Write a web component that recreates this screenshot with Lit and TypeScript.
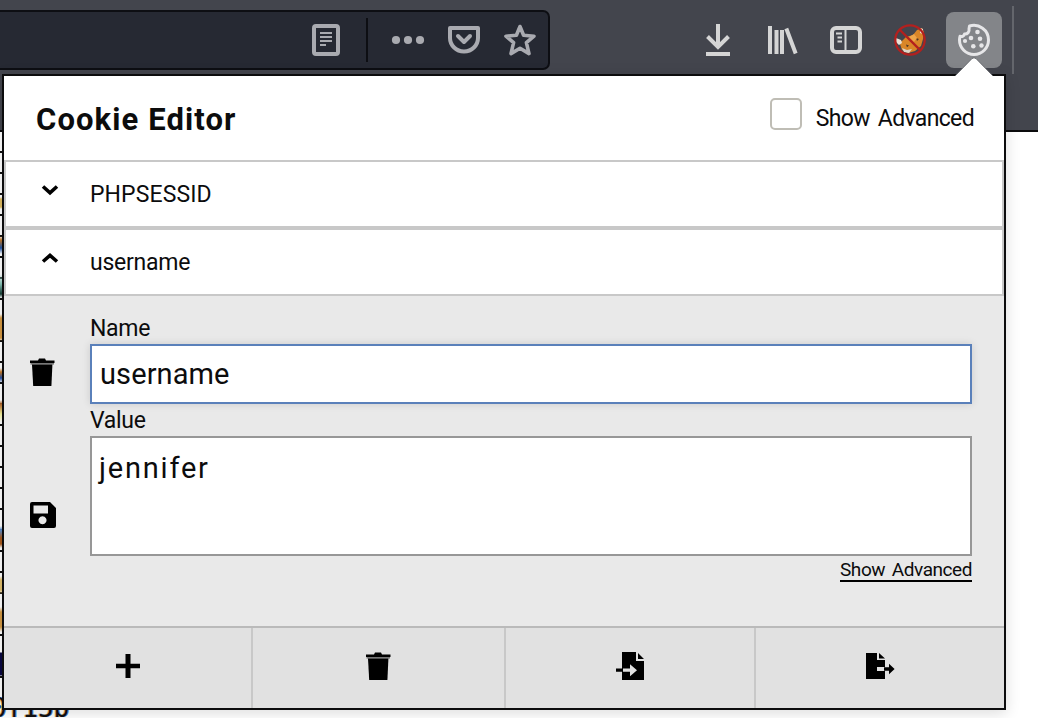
import { LitElement, html, css, svg } from "lit";
import { customElement, property, state } from "lit/decorators.js";

const trash = svg`<path d="M1 2.400h8L10 .4h6l1 2h8.500V5H1z"/><path d="M1.500 5h23.500v1.600H1.500z" fill="#777"/><path d="M3 6.600h20.400l-1 21.400H4.200z"/>`;

const exportGlyph = svg`
  <path d="M0 0h11v7h8v7H11v4h8v8H0z"/>
  <path d="M13 0l6 5.600h-6zM18 14.300h5v-3.600l5.600 5.300-5.600 5.300v-3.600h-5z"/>`;

const importGlyph = svg`
  <path d="M6 0h14v9h8v19H6z"/>
  <path d="M22 1l6 6h-6zM0 16.600h6v3.200H0z"/>
  <path fill="#e1e1e1" d="M7 16.600h7v-4.400l7 6-7 6v-4.400H7z"/>`;

@customElement("cookie-row")
export class CookieRow extends LitElement {
  @property() name = "";
  @property({ type: Boolean }) open = false;

  static styles = css`
    :host { display: flex; align-items: center; box-sizing: border-box; height: 68px; border: 2px solid #c8c8c8; background: #fff; padding-left: 35px; }
    .chevron { width: 18px; height: 12px; margin-bottom: 8px; margin-right: 31px; fill: none; stroke: #000; stroke-width: 3.6; }
    .name { font-size: 23px; line-height: 28px; padding-top: 2px; }
    .upper { letter-spacing: 0.1px; }
    .lower { letter-spacing: -0.25px; }
  `;

  render() {
    return html`
      <svg class="chevron" viewBox="0 0 18 12">
        <path d=${this.open ? "M2 9.5L9 3.4L16 9.5" : "M2 2.5L9 8.8L16 2.5"} />
      </svg>
      <span class="name ${this.open ? "lower" : "upper"}">${this.name}</span>
    `;
  }
}

@customElement("browser-toolbar")
export class BrowserToolbar extends LitElement {
  static styles = css`
    :host { display: flex; align-items: flex-start; box-sizing: border-box; height: 132px; background: #43454d; border-bottom: 2px solid #0c0c0d; }
    svg { display: block; overflow: visible; }
    .urlbar { display: flex; align-items: center; justify-content: flex-end; box-sizing: border-box; width: 550px; height: 60px; margin-top: 10px; padding-right: 12px; background: #262933; border: 2px solid #0d0e13; border-left: 0; border-radius: 0 7px 7px 0; }
    .glyph { width: 32px; height: 32px; }
    .dim { color: #a9aab0; }
    .divider { width: 2px; height: 44px; margin: 0 24px; background: #0d0e13; }
    .gap { margin-right: 24px; }
    .actions { display: flex; align-items: center; gap: 32px; height: 56px; margin: 12px 0 0 152px; color: #d5d5d5; }
    .active { display: flex; align-items: center; justify-content: center; width: 56px; height: 56px; margin-left: -12px; background: #838589; border-radius: 8px; color: #e6e6e8; }
    .edge { width: 2px; height: 68px; margin: 6px 0 0 10px; background: #64666c; }
  `;

  render() {
    return html`
      <div class="urlbar">
        <svg class="glyph dim" viewBox="0 0 32 32" fill="none" stroke="currentColor">
          <rect x="4" y="2" width="24" height="28" rx="2" stroke-width="4" />
          <path d="M10 9h12M10 13h12M10 17h12M10 21h6" stroke-width="2" />
        </svg>
        <div class="divider"></div>
        <svg class="glyph dim gap" viewBox="0 0 32 32" fill="currentColor">
          <circle cx="4" cy="16" r="4.1" /><circle cx="16" cy="16" r="4.1" /><circle cx="28" cy="16" r="4.1" />
        </svg>
        <svg class="glyph dim gap" viewBox="0 0 32 32" fill="none" stroke="currentColor" stroke-width="4" stroke-linejoin="round">
          <path d="M2 4h28v10a14 13.500 0 0 1-28 0z" />
          <path d="M10 12l6 6 6-6" stroke-linecap="round" />
        </svg>
        <svg class="glyph dim" viewBox="0 0 32 32" fill="none" stroke="currentColor" stroke-width="3.6" stroke-linejoin="round">
          <path d="M16 2.500l3.600 8.800 10.400.9-7.600 6.500 2.600 10.900-9-5.400-9 5.400 2.600-10.900L2 12.200l10.400-.9z" />
        </svg>
      </div>
      <div class="actions">
        <svg class="glyph" viewBox="0 0 32 32" fill="none" stroke="currentColor" stroke-width="4">
          <path d="M16 0v23M5.500 12.500L16 23l10.500-10.500M4 30h24" />
        </svg>
        <svg class="glyph" viewBox="0 0 32 32" fill="none" stroke="currentColor" stroke-width="4">
          <path d="M4 2v28M10.500 6v24M16 6v24M20.300 4.500l9.400 25" />
        </svg>
        <svg class="glyph" viewBox="0 0 32 32" fill="none" stroke="currentColor">
          <rect x="2" y="4" width="28" height="24" rx="4" stroke-width="4" />
          <path d="M15.500 5v22M6 9.500h6M7.500 13.500h4.500M7.500 17.500h4.500" stroke-width="2" />
        </svg>
        <svg class="glyph" viewBox="0 0 32 32">
          <path d="M3 16l5 1 4-4 7-2 4-5 5-2 2 4-1 7-2 7-6 5-7 2-6-3-2-6z" fill="#d98628" />
          <path d="M2 14l5 2 1 3-3 2-3-3zM26 4l3 1 0 5-3-1z" fill="#e9e2d8" />
          <path d="M8 24l5 2 5-1-3 4-5-1z" fill="#ddd5c8" />
          <path d="M12 20.500l3 1-2 1.800zM22 14l3 1-2 2z" fill="#4c3527" />
          <path d="M15 13l5-3 3 4-3 4z" fill="#eda64a" />
          <circle cx="16" cy="16" r="14.700" fill="none" stroke="#b3201e" stroke-width="2.200" />
          <path d="M6 6l20 20" stroke="#b3201e" stroke-width="2.400" />
        </svg>
        <div class="active">
          <svg class="glyph" viewBox="0 0 32 32" fill="none" stroke="currentColor" stroke-width="3" stroke-linejoin="round">
            <path d="M11.500 2C21 -.8 30.500 6 30.500 16a14.500 14.500 0 0 1-29 0c0-1.300.2-2.500.5-3.700 2.200.7 4-.2 4.500-2.300 3 .2 5.200-2.200 4.500-5z" />
            <g fill="currentColor" stroke="none">
              <circle cx="19.500" cy="8" r="2.300" /><circle cx="13" cy="14" r="2.300" /><circle cx="22" cy="14.700" r="2.300" /><circle cx="7" cy="17" r="2.100" />
              <circle cx="15.300" cy="22.300" r="2.300" /><circle cx="23.500" cy="21.500" r="2.200" />
            </g>
          </svg>
        </div>
      </div>
      <div class="edge"></div>
    `;
  }
}

@customElement("app-root")
export class AppRoot extends LitElement {
  @state() private cookieName = "username";
  @state() private cookieValue = "jennifer";

  static styles = css`
    :host { display: block; position: relative; width: 1038px; height: 718px; overflow: hidden; background: #fff; color: #0c0c0d; font-family: Roboto, "Liberation Sans", sans-serif; }
    * { box-sizing: border-box; }
    .page { display: flex; flex-direction: column; justify-content: space-between; height: 589px; }
    .margin-strip { width: 4px; height: 550px; background:
      linear-gradient(#0000 65px, #e0bd63 67px 75px, #0000 77px 104px, #c47a29 108px, #1f55a8 116px, #0000 122px 142px, #87c5b8 152px, #163f36 162px, #0000 166px 182px, #d69a43 186px 206px, #0000 209px 236px, #c87925 240px, #234fa6 246px, #0000 251px 268px, #b96b2e 272px, #f5f49c 282px, #0000 290px 394px, #5b91d5 398px, #a95b1d 406px 412px, #0000 416px 444px, #e2c06e 448px 458px, #0000 462px 475px, #d49a45 480px 495px, #0000 500px 520px, #090743 521px 543px, #0000 544px),
      repeating-linear-gradient(#fff 0 19px, #111 19px 21px); }
    .page-text { font: 26px/26px "DejaVu Sans Mono", monospace; margin-left: -9px; color: #111; text-shadow: -1px 0 #d9a45a, 1px 0 #5a8ad0; }
    .popup { position: absolute; left: 2px; top: 74px; width: 1004px; height: 636px; display: flex; flex-direction: column; background: #fff; border: 2px solid #0c0c0d; box-shadow: 0 3px 14px rgba(0, 0, 0, 0.14); }
    .pointer { position: absolute; right: 10px; top: -19px; width: 40px; height: 21px; }
    .header { display: flex; align-items: center; justify-content: space-between; height: 84px; padding: 0 30px 0 32px; }
    .title { margin: 0; font-size: 31px; line-height: 36px; letter-spacing: 1.1px; font-weight: 700; padding-top: 3px; }
    .advanced { display: flex; align-items: center; gap: 14px; font-size: 23px; line-height: 28px; letter-spacing: -0.65px; word-spacing: 3px; }
    .caption { padding-top: 2px; }
    .box { width: 32px; height: 32px; margin-bottom: 8px; border: 2px solid #bfbdb5; border-radius: 5px; }
    .details { display: flex; height: 330px; background: #e9e9e9; padding-right: 32px; }
    .side { display: flex; flex-direction: column; gap: 116px; width: 86px; padding: 62px 0 0 25px; }
    .icon { width: 28px; height: 28px; display: block; overflow: visible; }
    .fields { flex: 1; display: flex; flex-direction: column; gap: 4px; padding-top: 20px; }
    .label { height: 24px; font-size: 23px; line-height: 26px; letter-spacing: -0.3px; }
    .name-input { height: 60px; padding: 0 8px; border: 2px solid #5a80ba; background: #fff; box-shadow: 0 0 8px rgba(0, 0, 0, 0.13); font-size: 29px; line-height: 57px; letter-spacing: 0.1px; }
    .value-input { height: 120px; padding: 12px 7px; border: 2px solid #979797; background: #fff; font-size: 29px; line-height: 36px; letter-spacing: 1.8px; }
    .link { align-self: flex-end; font-size: 19px; line-height: 20px; height: 22px; letter-spacing: -0.45px; word-spacing: 2.5px; border-bottom: 2px solid #000; white-space: nowrap; }
    .footer { display: grid; grid-template-columns: 249px 253px 250px 1fr; height: 82px; border-top: 2px solid #bababa; background: #e1e1e1; }
    .cell { display: flex; align-items: center; justify-content: center; padding-bottom: 4px; border-right: 2px solid #c8c8c8; }
    .cell:last-child { border-right: 0; padding-right: 1px; }
  `;

  render() {
    return html`
      <browser-toolbar></browser-toolbar>
      <div class="page">
        <div class="margin-strip"></div>
        <div class="page-text">0f15b</div>
      </div>
      <div class="popup">
        <svg class="pointer" viewBox="0 0 40 21"><path d="M1 19L18 1.500Q20 0 22 1.500L39 19" fill="#fff" stroke="#65676c" stroke-width="1" /><path d="M2 18h36v3H2z" fill="#fff" /></svg>
        <div class="header">
          <h1 class="title">Cookie Editor</h1>
          <div class="advanced"><span class="box"></span><span class="caption">Show Advanced</span></div>
        </div>
        <cookie-row name="PHPSESSID"></cookie-row>
        <cookie-row name=${this.cookieName} open></cookie-row>
        <div class="details">
          <div class="side">
            <svg class="icon" viewBox="0 0 28 28">${trash}</svg>
            <svg class="icon" viewBox="0 0 28 28"><path fill-rule="evenodd" d="M3 0h18l6 6v18a2 2 0 0 1-2 2H3a2 2 0 0 1-2-2V2a2 2 0 0 1 2-2zM4.500 3.500v8H19v-8zM13.500 14.300a4 4 0 1 0 .01 0z" /></svg>
          </div>
          <div class="fields">
            <div class="label">Name</div>
            <div class="name-input">${this.cookieName}</div>
            <div class="label">Value</div>
            <div class="value-input">${this.cookieValue}</div>
            <div class="link">Show Advanced</div>
          </div>
        </div>
        <div class="footer">
          <div class="cell"><svg class="icon" viewBox="0 0 28 28"><path d="M11.500 2h5v9.700H26v4.600h-9.500V26h-5v-9.700H2v-4.600h9.500z" /></svg></div>
          <div class="cell"><svg class="icon" viewBox="0 0 28 28">${trash}</svg></div>
          <div class="cell"><svg class="icon" viewBox="0 0 28 28">${importGlyph}</svg></div>
          <div class="cell"><svg class="icon" viewBox="0 -1 28 28">${exportGlyph}</svg></div>
        </div>
      </div>
    `;
  }
}
